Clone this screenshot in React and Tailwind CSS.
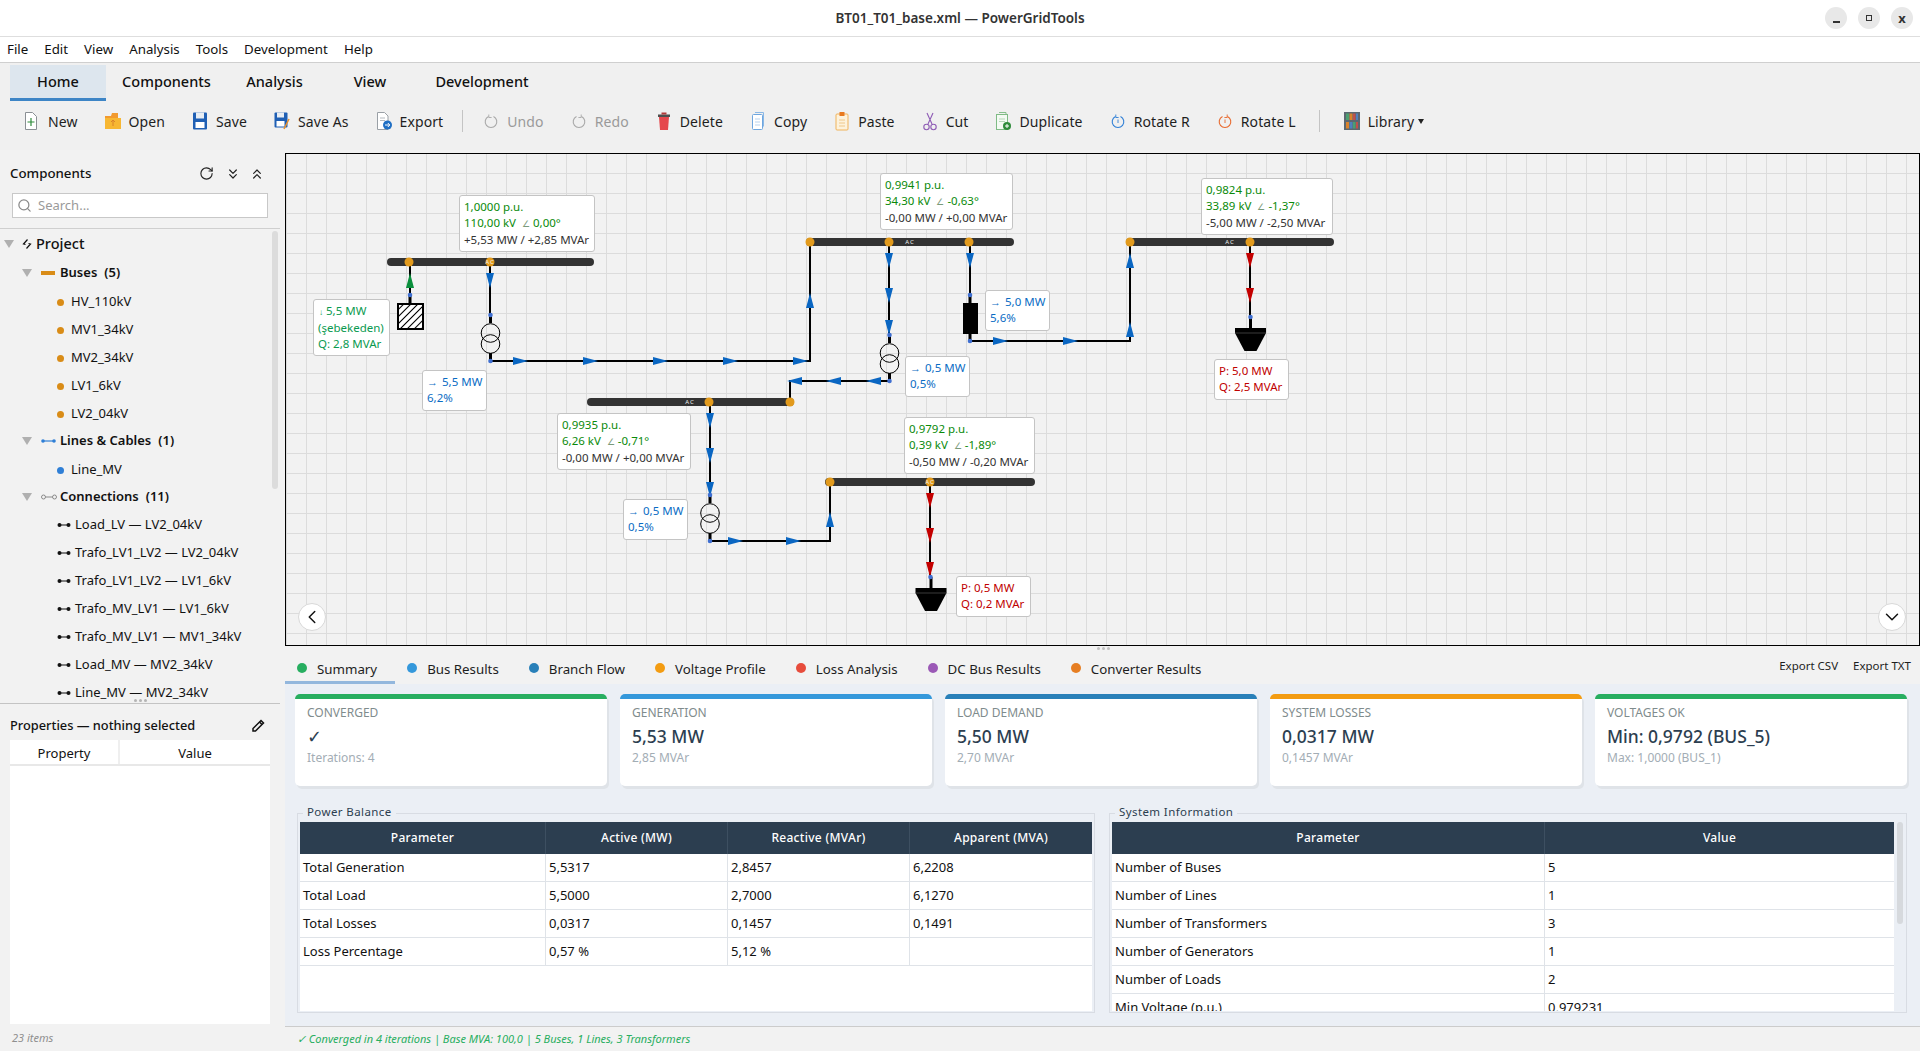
import React from "react";
import { Search, RotateCw, ChevronsDown, ChevronsUp, ChevronLeft, ChevronDown } from "lucide-react";

const NewIcon = () => (
  <svg width="18" height="20" viewBox="0 0 18 20" fill="none">
    <path d="M2.500 1.500h7l4 4v13h-11z" fill="#fff" stroke="#8a8f94" />
    <path d="M8 7v8M4.500 11h7" stroke="#2e8b3a" strokeWidth="1.200" />
  </svg>
);
const OpenIcon = () => (
  <svg width="18" height="20" viewBox="0 0 18 20">
    <path d="M1 5h6l1-3h6v5H1z" fill="#f29a2e" />
    <rect x="1" y="7" width="16" height="11" fill="#f7b733" />
    <path d="M9 9v6M7 11l2-2 2 2" stroke="#d9822b" strokeWidth="1" fill="none" />
  </svg>
);
const SaveIcon = () => (
  <svg width="18" height="20" viewBox="0 0 18 20">
    <rect x="2" y="1.500" width="14" height="17" rx="1" fill="#1f5fb4" />
    <rect x="5" y="1.500" width="8" height="6" fill="#e8edf3" />
    <rect x="4.500" y="11" width="9" height="6" fill="#fff" />
  </svg>
);
const SaveAsIcon = () => (
  <svg width="18" height="20" viewBox="0 0 18 20">
    <rect x="1.500" y="1.500" width="13" height="15" rx="1" fill="#1f5fb4" />
    <rect x="4" y="1.500" width="7" height="5" fill="#e8edf3" />
    <rect x="3.500" y="10" width="8" height="5.500" fill="#fff" />
    <path d="M16 8l-5 10" stroke="#e8912d" strokeWidth="1.600" />
  </svg>
);
const ExportIcon = () => (
  <svg width="18" height="20" viewBox="0 0 18 20">
    <path d="M2.500 1.500h7l3.500 3.500v13.500h-10.500z" fill="#fff" stroke="#9aa0a6" />
    <path d="M5 7h5M5 9.500h5" stroke="#b5bac0" />
    <circle cx="12.500" cy="14" r="4.500" fill="#1f6fc4" />
    <path d="M10 14h4.500M12.800 12l2 2-2 2" stroke="#fff" strokeWidth="1" fill="none" />
  </svg>
);
const TurnIcon = ({ color, flip, tick }) => (
  <svg width="18" height="20" viewBox="0 0 18 20" fill="none" className={flip ? "-scale-x-100" : ""}>
    <path d="M6.500 5.500a5.800 5.800 0 1 0 5 0" stroke={color} strokeWidth="1.100" />
    <path d="M6.800 3.500v3h2.800" stroke={color} strokeWidth="0.900" />
    {tick && <path d="M9 8.500v3.500" stroke={color} strokeWidth="0.900" />}
  </svg>
);
const TrashIcon = () => (
  <svg width="18" height="20" viewBox="0 0 18 20">
    <rect x="3" y="3.500" width="12" height="2.500" fill="#333" opacity="0.850" />
    <rect x="6.500" y="1.500" width="5" height="2" fill="#b23a3a" />
    <path d="M4 6h10l-1 13H5z" fill="#e5484d" />
  </svg>
);
const CopyIcon = () => (
  <svg width="18" height="20" viewBox="0 0 18 20" fill="none">
    <path d="M6 1.500h8.500v14" stroke="#8ab8e6" />
    <rect x="3.500" y="3.500" width="10" height="15" rx="1" fill="#fff" stroke="#6ea6df" />
    <path d="M6 8h5M6 11h5M6 14h5" stroke="#b9d3ee" />
  </svg>
);
const PasteIcon = () => (
  <svg width="18" height="20" viewBox="0 0 18 20">
    <rect x="3" y="3" width="12" height="16" rx="1" fill="#fdf2dc" stroke="#f0b35a" />
    <rect x="6.500" y="1" width="5" height="4" fill="#e8791f" />
    <path d="M6 9h6M6 12h6M6 15h6" stroke="#f0c88a" />
  </svg>
);
const CutIcon = () => (
  <svg width="18" height="20" viewBox="0 0 18 20" fill="none" stroke="#8e5bb5" strokeWidth="1.100">
    <path d="M6 2l5 11M12 2L7 13" />
    <circle cx="5.500" cy="16" r="2.700" />
    <circle cx="12.500" cy="16" r="2.700" />
  </svg>
);
const DuplicateIcon = () => (
  <svg width="18" height="20" viewBox="0 0 18 20">
    <path d="M5 1.500h7v2" fill="none" stroke="#86c08c" />
    <rect x="2.500" y="3.500" width="11" height="15" fill="#f3faf3" stroke="#7fbb85" />
    <path d="M5 8h6M5 10.500h6" stroke="#b4d8b7" />
    <circle cx="13" cy="15" r="4" fill="#2e8b3a" />
    <path d="M13 13v4M11 15h4" stroke="#fff" />
  </svg>
);
const LibraryIcon = () => (
  <svg width="18" height="20" viewBox="0 0 18 20">
    <rect x="1" y="1" width="16" height="18" fill="#5b6770" />
    <rect x="3" y="2.500" width="3" height="6.500" fill="#4c9f70" />
    <rect x="6.500" y="2.500" width="3" height="6.500" fill="#d9822b" />
    <rect x="10" y="2.500" width="2.500" height="6.500" fill="#c0504d" />
    <rect x="13" y="2.500" width="2" height="6.500" fill="#4f81bd" />
    <rect x="3" y="11" width="3" height="6.500" fill="#d9822b" />
    <rect x="6.500" y="11" width="3" height="6.500" fill="#4f81bd" />
    <rect x="10" y="11" width="2.500" height="6.500" fill="#4c9f70" />
    <rect x="13" y="11" width="2" height="6.500" fill="#c0504d" />
  </svg>
);

const ToolButton = ({ icon, label, muted, children }) => (
  <button className={`flex h-[30px] shrink-0 items-center gap-[7px] px-[12px] text-[14px] tracking-[0.1px] ${muted ? "text-[#9a9a9a]" : "text-[#1e1e1e]"}`}>
    {icon}
    <span>{label}</span>
    {children}
  </button>
);

const ConnDots = () => (
  <svg width="14" height="6" viewBox="0 0 14 6" className="mr-[4px] shrink-0">
    <circle cx="2.500" cy="3" r="2" fill="#111" />
    <circle cx="11.500" cy="3" r="2" fill="#111" />
    <path d="M3 3h8" stroke="#111" />
  </svg>
);

const Caret = () => <span className="h-0 w-0 border-x-[5px] border-t-[8px] border-x-transparent border-t-[#b0b0b0]" />;

const busItems = ["HV_110kV", "MV1_34kV", "MV2_34kV", "LV1_6kV", "LV2_04kV"];
const connItems = [
  "Load_LV — LV2_04kV",
  "Trafo_LV1_LV2 — LV2_04kV",
  "Trafo_LV1_LV2 — LV1_6kV",
  "Trafo_MV_LV1 — LV1_6kV",
  "Trafo_MV_LV1 — MV1_34kV",
  "Load_MV — MV2_34kV",
  "Line_MV — MV2_34kV",
];

const GroupRow = ({ icon, label, count }) => (
  <div className="flex h-[27px] items-center pl-[22px] text-[13px] font-semibold text-[#111]">
    <Caret />
    <span className="ml-[9px] flex w-[19px] shrink-0 items-center">{icon}</span>
    <span>{label}</span>
    <span className="ml-[7px]">{count}</span>
  </div>
);

const DotRow = ({ color, label }) => (
  <div className="flex h-[28px] items-center pl-[57px] text-[13px] text-[#111]">
    <span className={`mr-[7px] size-[7px] rounded-full ${color}`} />
    {label}
  </div>
);

const Sidebar = () => (
  <aside className="flex w-[285px] shrink-0 flex-col bg-[#f2f2f2]">
    <div className="w-[280px]">
      <div className="flex h-[43px] items-center px-[10px] pt-[4px]">
        <span className="text-[13.300px] font-medium text-[#111]">Components</span>
        <RotateCw size={15} strokeWidth={1.800} className="ml-auto text-[#222]" />
        <ChevronsDown size={16} strokeWidth={1.800} className="ml-[11px] text-[#222]" />
        <ChevronsUp size={16} strokeWidth={1.800} className="mr-[5px] ml-[8px] text-[#222]" />
      </div>
      <div className="mx-[12px] flex h-[25px] items-center gap-[6px] border border-[#c8c8c8] bg-white px-[4px]">
        <Search size={15} className="text-[#8a8a8a]" />
        <span className="text-[13px] text-[#9a9a9a]">Search...</span>
      </div>
      <div className="relative mt-[10px] h-[476px] overflow-hidden border-t border-b border-t-[#cfcfcf] border-b-[#c4c4c4]">
        <div className="mt-[2px] flex h-[28px] items-center pb-[2px] pl-[4px] text-[14.500px] font-medium text-[#111]">
          <Caret />
          <svg width="10" height="12" viewBox="0 0 10 12" className="mr-[4px] ml-[8px]" fill="none" stroke="#111" strokeWidth="1.200">
            <path d="M5.500 1.500L1.500 6l2 .500M4.500 10.500l4-4.500-2-.500" />
          </svg>
          Project
        </div>
        <GroupRow label="Buses" count="(5)" icon={<span className="h-[4px] w-[14px] bg-[#d98c17]" />} />
        <div className="-mb-[1px] pt-[2px]">
          {busItems.map((b) => (
            <DotRow key={b} color="bg-[#d98c17]" label={b} />
          ))}
        </div>
        <GroupRow
          label="Lines & Cables"
          count="(1)"
          icon={
            <svg width="15" height="6" viewBox="0 0 15 6">
              <circle cx="2" cy="3" r="1.800" fill="#2f7fd6" />
              <circle cx="13" cy="3" r="1.800" fill="#2f7fd6" />
              <path d="M2 3h11" stroke="#2f7fd6" strokeWidth="1.200" />
            </svg>
          }
        />
        <div className="-mb-[1px] pt-[2px]">
          <DotRow color="bg-[#2f7fd6]" label="Line_MV" />
        </div>
        <GroupRow
          label="Connections"
          count="(11)"
          icon={
            <svg width="16" height="6" viewBox="0 0 16 6" fill="none" stroke="#8a8a8a">
              <circle cx="2.500" cy="3" r="2" />
              <circle cx="13.500" cy="3" r="2" />
              <path d="M4.500 3h7" />
            </svg>
          }
        />
        <div className="pt-[1px]">
          {connItems.map((c) => (
            <div key={c} className="flex h-[28px] items-center pl-[57px] text-[13px] whitespace-nowrap text-[#111]">
              <ConnDots />
              {c}
            </div>
          ))}
        </div>
        <div className="absolute top-[2px] left-[272px] h-[258px] w-[6px] rounded-full bg-[#dcdcdc]" />
        <div className="absolute bottom-0 left-[134px] flex gap-[2px] pb-[1px]">
          <span className="size-[3px] rounded-full bg-[#b5b5b5]" />
          <span className="size-[3px] rounded-full bg-[#b5b5b5]" />
          <span className="size-[3px] rounded-full bg-[#b5b5b5]" />
        </div>
      </div>
      <div className="flex h-[36px] items-center justify-between pt-[8px] pr-[15px] pl-[10px]">
        <span className="text-[12.800px] font-medium text-[#111]">Properties — nothing selected</span>
        <svg width="14" height="14" viewBox="0 0 14 14" fill="none" stroke="#111" strokeWidth="1.500">
          <path d="M10 1.500l2.500 2.500-8 8H2v-2.500z" />
          <path d="M8.500 3l2.500 2.500" />
        </svg>
      </div>
      <div className="ml-[10px] h-[284px] w-[260px] bg-white">
        <div className="flex h-[26px] border-b-2 border-[#e8e8e8] text-center text-[13px] text-[#111]">
          <div className="w-[110px] border-r-2 border-[#efefef] pt-[2px] leading-[22px]">Property</div>
          <div className="flex-1 pt-[2px] leading-[22px]">Value</div>
        </div>
      </div>
      <div className="pt-[6px] pl-[12px] text-[11px] text-[#8f8f8f] italic">23 items</div>
    </div>
  </aside>
);

const arrowColors = { blue: "#0a66c2", red: "#c40000", green: "#0a8f3c" };
// x,y is the arrow tip, drawn 15px long and 8px wide
const Arrow = ({ x, y, dir, color }) => {
  const pts = {
    r: `${x},${y} ${x - 15},${y - 4} ${x - 15},${y + 4}`,
    l: `${x},${y} ${x + 15},${y - 4} ${x + 15},${y + 4}`,
    d: `${x},${y} ${x - 4},${y - 15} ${x + 4},${y - 15}`,
    u: `${x},${y} ${x - 4},${y + 15} ${x + 4},${y + 15}`,
  }[dir];
  return <polygon points={pts} fill={arrowColors[color]} />;
};

const Bus = ({ x1, x2, y, nodes, ac }) => (
  <g>
    <rect x={x1} y={y - 4} width={x2 - x1} height="8" rx="4" fill="#333" />
    {nodes.map((n) => (
      <circle key={n} cx={n} cy={y} r="4.500" fill="#e29a1c" />
    ))}
    <text x={ac} y={y + 2} textAnchor="middle" fontSize="6" letterSpacing="1" fill="#eee" fontFamily="Noto Sans, sans-serif">
      AC
    </text>
  </g>
);

const Port = ({ x, y }) => <circle cx={x} cy={y} r="2.300" fill="#3f6fd1" />;

const Trafo = ({ x, y }) => (
  <g fill="none" stroke="#000" strokeWidth="1">
    <path d={`M${x} ${y}v8`} strokeWidth="3" />
    <circle cx={x} cy={y + 18} r="9.300" />
    <circle cx={x} cy={y + 29} r="9.300" />
    <path d={`M${x} ${y + 38}v8`} strokeWidth="3" />
  </g>
);

const Load = ({ x, y }) => (
  <g>
    <path d={`M${x} ${y - 11}v11`} stroke="#000" strokeWidth="3" />
    <polygon points={`${x - 15.500},${y} ${x + 15.500},${y} ${x + 15.500},${y + 5} ${x + 6},${y + 23} ${x - 6},${y + 23} ${x - 15.500},${y + 5}`} fill="#000" />
    <path d={`M${x - 15.500} ${y + 5}h31`} stroke="#555" strokeWidth="0.700" />
  </g>
);

const wires = [
  "M410 262V303",
  "M490 262V315",
  "M490 361H810V242",
  "M889 242V335",
  "M889 381H790V402",
  "M710 402V495",
  "M710 541H830V482",
  "M930 482V577",
  "M970 242V295",
  "M970 341H1130V242",
  "M1250 242V317",
];

const arrows = [
  [410, 273, "u", "green"],
  [490, 288, "d", "blue"],
  [528, 361, "r", "blue"], [598, 361, "r", "blue"], [668, 361, "r", "blue"], [738, 361, "r", "blue"], [808, 361, "r", "blue"],
  [810, 293, "u", "blue"],
  [889, 268, "d", "blue"], [889, 303, "d", "blue"], [889, 335, "d", "blue"],
  [866, 381, "l", "blue"], [826, 381, "l", "blue"], [787, 381, "l", "blue"],
  [710, 428, "d", "blue"], [710, 463, "d", "blue"], [710, 497, "d", "blue"],
  [743, 541, "r", "blue"], [801, 541, "r", "blue"],
  [830, 512, "u", "blue"],
  [930, 508, "d", "red"], [930, 543, "d", "red"], [930, 577, "d", "red"],
  [970, 268, "d", "blue"],
  [1008, 341, "r", "blue"], [1078, 341, "r", "blue"],
  [1130, 322, "u", "blue"], [1130, 253, "u", "blue"],
  [1250, 268, "d", "red"], [1250, 303, "d", "red"],
];

const Green = ({ children }) => <div className="text-[#0a8a0a]">{children}</div>;
const Dark = ({ children }) => <div className="text-[#333]">{children}</div>;
const Ang = () => <span className="mx-[3px] text-[9px] text-[#7a9a7a]">∠</span>;
const Flow = ({ children }) => (
  <div>
    <span className="mr-[4px] text-[11px]">→</span>
    {children}
  </div>
);

const boxClass = "absolute rounded-[3px] border border-[#c4c4c4] bg-white px-[4px] py-[3px] text-[11.500px] leading-[16px] whitespace-nowrap";

const DiagramLabels = () => (
  <>
    <div className={`${boxClass} top-[41px] left-[173px] h-[57px] w-[136px]`}>
      <Green>1,0000 p.u.</Green>
      <Green>110,00 kV <Ang />0,00°</Green>
      <Dark>+5,53 MW / +2,85 MVAr</Dark>
    </div>
    <div className={`${boxClass} top-[145px] left-[27px] h-[57px] w-[77px] text-[#0a9a4f]`}>
      <div><span className="mr-[3px] ml-[1px] text-[8px]">↓</span>5,5 MW</div>
      <div>(şebekeden)</div>
      <div>Q: 2,8 MVAr</div>
    </div>
    <div className={`${boxClass} top-[216px] left-[136px] h-[41px] w-[65px] text-[#0a6cc4]`}>
      <Flow>5,5 MW</Flow>
      <div>6,2%</div>
    </div>
    <div className={`${boxClass} top-[259px] left-[271px] h-[57px] w-[134px]`}>
      <Green>0,9935 p.u.</Green>
      <Green>6,26 kV <Ang />-0,71°</Green>
      <Dark>-0,00 MW / +0,00 MVAr</Dark>
    </div>
    <div className={`${boxClass} top-[19px] left-[594px] h-[57px] w-[133px]`}>
      <Green>0,9941 p.u.</Green>
      <Green>34,30 kV <Ang />-0,63°</Green>
      <Dark>-0,00 MW / +0,00 MVAr</Dark>
    </div>
    <div className={`${boxClass} top-[24px] left-[915px] h-[57px] w-[132px]`}>
      <Green>0,9824 p.u.</Green>
      <Green>33,89 kV <Ang />-1,37°</Green>
      <Dark>-5,00 MW / -2,50 MVAr</Dark>
    </div>
    <div className={`${boxClass} top-[136px] left-[699px] h-[41px] w-[65px] text-[#0a6cc4]`}>
      <Flow>5,0 MW</Flow>
      <div>5,6%</div>
    </div>
    <div className={`${boxClass} top-[202px] left-[619px] h-[41px] w-[65px] text-[#0a6cc4]`}>
      <Flow>0,5 MW</Flow>
      <div>0,5%</div>
    </div>
    <div className={`${boxClass} top-[205px] left-[928px] h-[41px] w-[75px] text-[#c00000]`}>
      <div>P: 5,0 MW</div>
      <div>Q: 2,5 MVAr</div>
    </div>
    <div className={`${boxClass} top-[263px] left-[618px] h-[57px] w-[131px]`}>
      <Green>0,9792 p.u.</Green>
      <Green>0,39 kV <Ang />-1,89°</Green>
      <Dark>-0,50 MW / -0,20 MVAr</Dark>
    </div>
    <div className={`${boxClass} top-[345px] left-[337px] h-[41px] w-[65px] text-[#0a6cc4]`}>
      <Flow>0,5 MW</Flow>
      <div>0,5%</div>
    </div>
    <div className={`${boxClass} top-[422px] left-[670px] h-[41px] w-[75px] text-[#c00000]`}>
      <div>P: 0,5 MW</div>
      <div>Q: 0,2 MVAr</div>
    </div>
  </>
);

const Diagram = () => (
  <div className="relative h-[493px] shrink-0 overflow-hidden border border-black bg-[#f2f2f2] bg-[linear-gradient(#dcdcdc_1px,transparent_1px),linear-gradient(90deg,#dcdcdc_1px,transparent_1px)] bg-[size:20px_20px] bg-[position:0px_-1px]">
    <svg className="absolute inset-0" width="1633" height="491" viewBox="286 154 1633 491">
      <defs>
        <pattern id="hatch" width="5" height="5" patternUnits="userSpaceOnUse" patternTransform="rotate(45)">
          <rect width="5" height="5" fill="#fff" />
          <path d="M0 0V5" stroke="#000" strokeWidth="2" />
        </pattern>
      </defs>
      {wires.map((d) => (
        <path key={d} d={d} fill="none" stroke="#000" strokeWidth="2" />
      ))}
      <Bus x1={387} x2={594} y={262} nodes={[409, 490]} ac={490} />
      <Bus x1={806} x2={1014} y={242} nodes={[810, 889, 969]} ac={910} />
      <Bus x1={587} x2={794} y={402} nodes={[709, 790]} ac={690} />
      <Bus x1={825} x2={1035} y={482} nodes={[830, 930]} ac={930} />
      <Bus x1={1126} x2={1334} y={242} nodes={[1130, 1250]} ac={1230} />
      {arrows.map(([x, y, dir, color]) => (
        <Arrow key={`${x}-${y}`} x={x} y={y} dir={dir} color={color} />
      ))}
      <path d="M410 295v8" stroke="#000" strokeWidth="3" />
      <rect x="398" y="304" width="25" height="25" fill="url(#hatch)" stroke="#000" strokeWidth="2" />
      <Port x={410} y={295} />
      <Trafo x={490.500} y={315} />
      <Port x={490.500} y={315} />
      <Port x={490.500} y={361} />
      <Trafo x={889.500} y={335} />
      <Port x={889.500} y={335} />
      <Port x={889.500} y={381} />
      <Trafo x={710} y={495} />
      <Port x={710} y={495} />
      <Port x={710} y={541} />
      <path d="M970 295v47" stroke="#000" strokeWidth="3" />
      <rect x="963" y="303" width="15" height="31" fill="#000" />
      <Port x={970} y={295} />
      <Port x={970} y={341} />
      <Load x={1250.500} y={328} />
      <Port x={1250.500} y={317} />
      <Load x={931} y={588} />
      <Port x={930.500} y={577} />
    </svg>
    <DiagramLabels />
    <button className="absolute top-[449px] left-[12px] flex size-[28px] items-center justify-center rounded-full border border-[#d8d8d8] bg-white">
      <ChevronLeft size={22} strokeWidth={1.600} className="text-[#111]" />
    </button>
    <button className="absolute top-[449px] right-[13px] flex size-[28px] items-center justify-center rounded-full border border-[#d8d8d8] bg-white">
      <ChevronDown size={22} strokeWidth={1.600} className="text-[#111]" />
    </button>
  </div>
);

const tabs = [
  { label: "Summary", dot: "bg-[#27ae60]", active: true },
  { label: "Bus Results", dot: "bg-[#3498db]" },
  { label: "Branch Flow", dot: "bg-[#2980b9]" },
  { label: "Voltage Profile", dot: "bg-[#f39c12]" },
  { label: "Loss Analysis", dot: "bg-[#e74c3c]" },
  { label: "DC Bus Results", dot: "bg-[#9b59b6]" },
  { label: "Converter Results", dot: "bg-[#e67e22]" },
];

const cards = [
  { title: "CONVERGED", value: "✓", sub: "Iterations: 4", bar: "border-t-[#27ae60]" },
  { title: "GENERATION", value: "5,53 MW", sub: "2,85 MVAr", bar: "border-t-[#3498db]" },
  { title: "LOAD DEMAND", value: "5,50 MW", sub: "2,70 MVAr", bar: "border-t-[#2980b9]" },
  { title: "SYSTEM LOSSES", value: "0,0317 MW", sub: "0,1457 MVAr", bar: "border-t-[#f39c12]" },
  { title: "VOLTAGES OK", value: "Min: 0,9792 (BUS_5)", sub: "Max: 1,0000 (BUS_1)", bar: "border-t-[#27ae60]" },
];

const balanceRows = [
  ["Total Generation", "5,5317", "2,8457", "6,2208"],
  ["Total Load", "5,5000", "2,7000", "6,1270"],
  ["Total Losses", "0,0317", "0,1457", "0,1491"],
  ["Loss Percentage", "0,57 %", "5,12 %", ""],
];

const infoRows = [
  ["Number of Buses", "5"],
  ["Number of Lines", "1"],
  ["Number of Transformers", "3"],
  ["Number of Generators", "1"],
  ["Number of Loads", "2"],
  ["Min Voltage (p.u.)", "0,979231"],
];

const DataTable = ({ cols, head, rows }) => (
  <div className="h-[189px] flex-1 overflow-hidden bg-white text-[13px]">
    <div className={`grid h-[32px] bg-[#2c3e50] text-[12px] font-medium tracking-[0.3px] text-white ${cols}`}>
      {head.map((h) => (
        <div key={h} className="flex items-center justify-center border-r border-[#3d4f61] last:border-r-0">
          {h}
        </div>
      ))}
    </div>
    {rows.map((r) => (
      <div key={r[0]} className={`grid h-[28px] border-b border-[#dfe3e8] text-[#111] ${cols}`}>
        {r.map((c, i) => (
          <div key={i} className="flex items-center border-r border-[#dfe3e8] pl-[3px] last:border-r-0">
            {c}
          </div>
        ))}
      </div>
    ))}
  </div>
);

const Group = ({ title, children }) => (
  <fieldset className="relative flex h-[200px] w-[798px] gap-[2px] border border-[#d8dce3] px-[2px] pt-[8px]">
    <div className="absolute -top-[10px] left-[5px] bg-[#ebeff5] px-[4px] text-[11.500px] leading-[16px] tracking-[0.4px] text-[#2c3e50]">
      {title}
    </div>
    {children}
  </fieldset>
);

const ResultsPanel = () => (
  <div className="flex flex-1 flex-col bg-[#ebeff5]">
    <div className="flex gap-[13px] pt-[10px] pr-[13px] pl-[10px]">
      {cards.map((c) => (
        <div key={c.title} className={`h-[92px] flex-1 rounded-[5px] border-t-[5px] bg-white px-[12px] pt-[6px] shadow-[2px_3px_0_#dfe3e8] ${c.bar}`}>
          <div className="text-[12px] leading-[16px] text-[#7f8c8d]">{c.title}</div>
          <div className="mt-[2px] text-[17.500px] leading-[26px] font-medium whitespace-nowrap text-[#2c3e50]">{c.value}</div>
          <div className="mt-[1px] text-[12px] leading-[16px] text-[#a3adb5]">{c.sub}</div>
        </div>
      ))}
    </div>
    <div className="mt-[27px] flex gap-[14px] pl-[12px]">
      <Group title="Power Balance">
        <DataTable
          cols="grid-cols-[246px_182px_182px_182px]"
          head={["Parameter", "Active (MW)", "Reactive (MVAr)", "Apparent (MVA)"]}
          rows={balanceRows}
        />
      </Group>
      <Group title="System Information">
        <DataTable cols="grid-cols-[433px_349px]" head={["Parameter", "Value"]} rows={infoRows} />
        <div className="w-[8px] pl-[1px]">
          <div className="h-[102px] w-[6px] rounded-full bg-[#d6d9dd]" />
        </div>
      </Group>
    </div>
  </div>
);

const menus = ["File", "Edit", "View", "Analysis", "Tools", "Development", "Help"];

export default function App() {
  return (
    <div className="flex h-[1051px] w-[1920px] flex-col overflow-hidden bg-[#f0f0f0] font-['Noto_Sans',sans-serif]">
      <header className="relative flex h-[37px] shrink-0 items-center justify-center border-b border-[#dedede] bg-white">
        <span className="text-[13.500px] font-semibold text-[#333]">BT01_T01_base.xml — PowerGridTools</span>
        <div className="absolute top-[7px] right-[7px] flex gap-[11px]">
          <span className="flex size-[22px] items-end justify-center rounded-full bg-[#e8e8e8] pb-[6px]">
            <span className="h-[2px] w-[7px] bg-[#333]" />
          </span>
          <span className="flex size-[22px] items-center justify-center rounded-full bg-[#e8e8e8]">
            <span className="size-[6px] border-[1.500px] border-[#333]" />
          </span>
          <span className="flex size-[22px] items-center justify-center rounded-full bg-[#e8e8e8] text-[13px] leading-none font-bold text-[#333]">x</span>
        </div>
      </header>
      <nav className="flex h-[26px] shrink-0 items-center gap-[16px] border-b border-[#cfcfcf] bg-white pt-[1px] pl-[7px] text-[13.300px] text-[#111]">
        {menus.map((m) => (
          <span key={m}>{m}</span>
        ))}
      </nav>
      <div className="flex h-[38px] shrink-0 items-stretch pt-[2px] pl-[10px] text-[14.500px] font-medium text-[#111]">
        <div className="flex w-[96px] items-center justify-center border-b-[3px] border-[#3d85c6] bg-[#dde6ee]">Home</div>
        <div className="flex w-[121px] items-center justify-center pb-[3px]">Components</div>
        <div className="flex w-[95px] items-center justify-center pb-[3px]">Analysis</div>
        <div className="flex w-[96px] items-center justify-center pb-[3px]">View</div>
        <div className="flex w-[128px] items-center justify-center pb-[3px]">Development</div>
      </div>
      <div className="flex h-[49px] shrink-0 items-start gap-[2px] pt-[5px] pl-[11px]">
        <ToolButton icon={<NewIcon />} label="New" />
        <ToolButton icon={<OpenIcon />} label="Open" />
        <ToolButton icon={<SaveIcon />} label="Save" />
        <ToolButton icon={<SaveAsIcon />} label="Save As" />
        <ToolButton icon={<ExportIcon />} label="Export" />
        <span className="mx-[5px] mt-[4px] h-[22px] w-px bg-[#c4c4c4]" />
        <ToolButton icon={<TurnIcon color="#a8a8a8" />} label="Undo" muted />
        <ToolButton icon={<TurnIcon color="#a8a8a8" flip />} label="Redo" muted />
        <ToolButton icon={<TrashIcon />} label="Delete" />
        <ToolButton icon={<CopyIcon />} label="Copy" />
        <ToolButton icon={<PasteIcon />} label="Paste" />
        <ToolButton icon={<CutIcon />} label="Cut" />
        <ToolButton icon={<DuplicateIcon />} label="Duplicate" />
        <ToolButton icon={<TurnIcon color="#2f7fd6" tick />} label="Rotate R" />
        <ToolButton icon={<TurnIcon color="#e8692d" flip tick />} label="Rotate L" />
        <span className="mx-[9px] mt-[4px] h-[22px] w-px bg-[#c4c4c4]" />
        <ToolButton icon={<LibraryIcon />} label="Library">
          <span className="-ml-[3px] h-0 w-0 border-x-[3px] border-t-[5px] border-x-transparent border-t-[#222]" />
        </ToolButton>
      </div>
      <div className="flex min-h-0 flex-1">
        <Sidebar />
        <main className="flex min-w-0 flex-1 flex-col bg-[#f2f2f2] pt-[3px]">
          <Diagram />
          <div className="relative flex h-[38px] shrink-0 items-stretch">
            {tabs.map((t) => (
              <div key={t.label} className={`flex items-center border-b-[3px] pt-[13px] pr-[18px] pl-[12px] text-[13.300px] text-[#1e1e1e] ${t.active ? "border-[#93b7dd]" : "border-transparent"}`}>
                <span className={`-mt-[4px] mr-[10px] size-[10px] rounded-full ${t.dot}`} />
                {t.label}
              </div>
            ))}
            <div className="ml-auto flex gap-[15px] pt-[11px] pr-[9px] text-[11.500px] text-[#1e1e1e]">
              <span>Export CSV</span>
              <span>Export TXT</span>
            </div>
            <div className="absolute top-[1px] left-[812px] flex gap-[2px]">
              <span className="size-[3px] rounded-full bg-[#c0c0c0]" />
              <span className="size-[3px] rounded-full bg-[#c0c0c0]" />
              <span className="size-[3px] rounded-full bg-[#c0c0c0]" />
            </div>
          </div>
          <ResultsPanel />
          <div className="flex h-[25px] shrink-0 items-center border-t border-[#cccccc] bg-[#f2f2f2] pl-[12px] text-[11px] text-[#27ae60] italic">
            ✓ Converged in 4 iterations | Base MVA: 100,0 | 5 Buses, 1 Lines, 3 Transformers
          </div>
        </main>
      </div>
    </div>
  );
}
